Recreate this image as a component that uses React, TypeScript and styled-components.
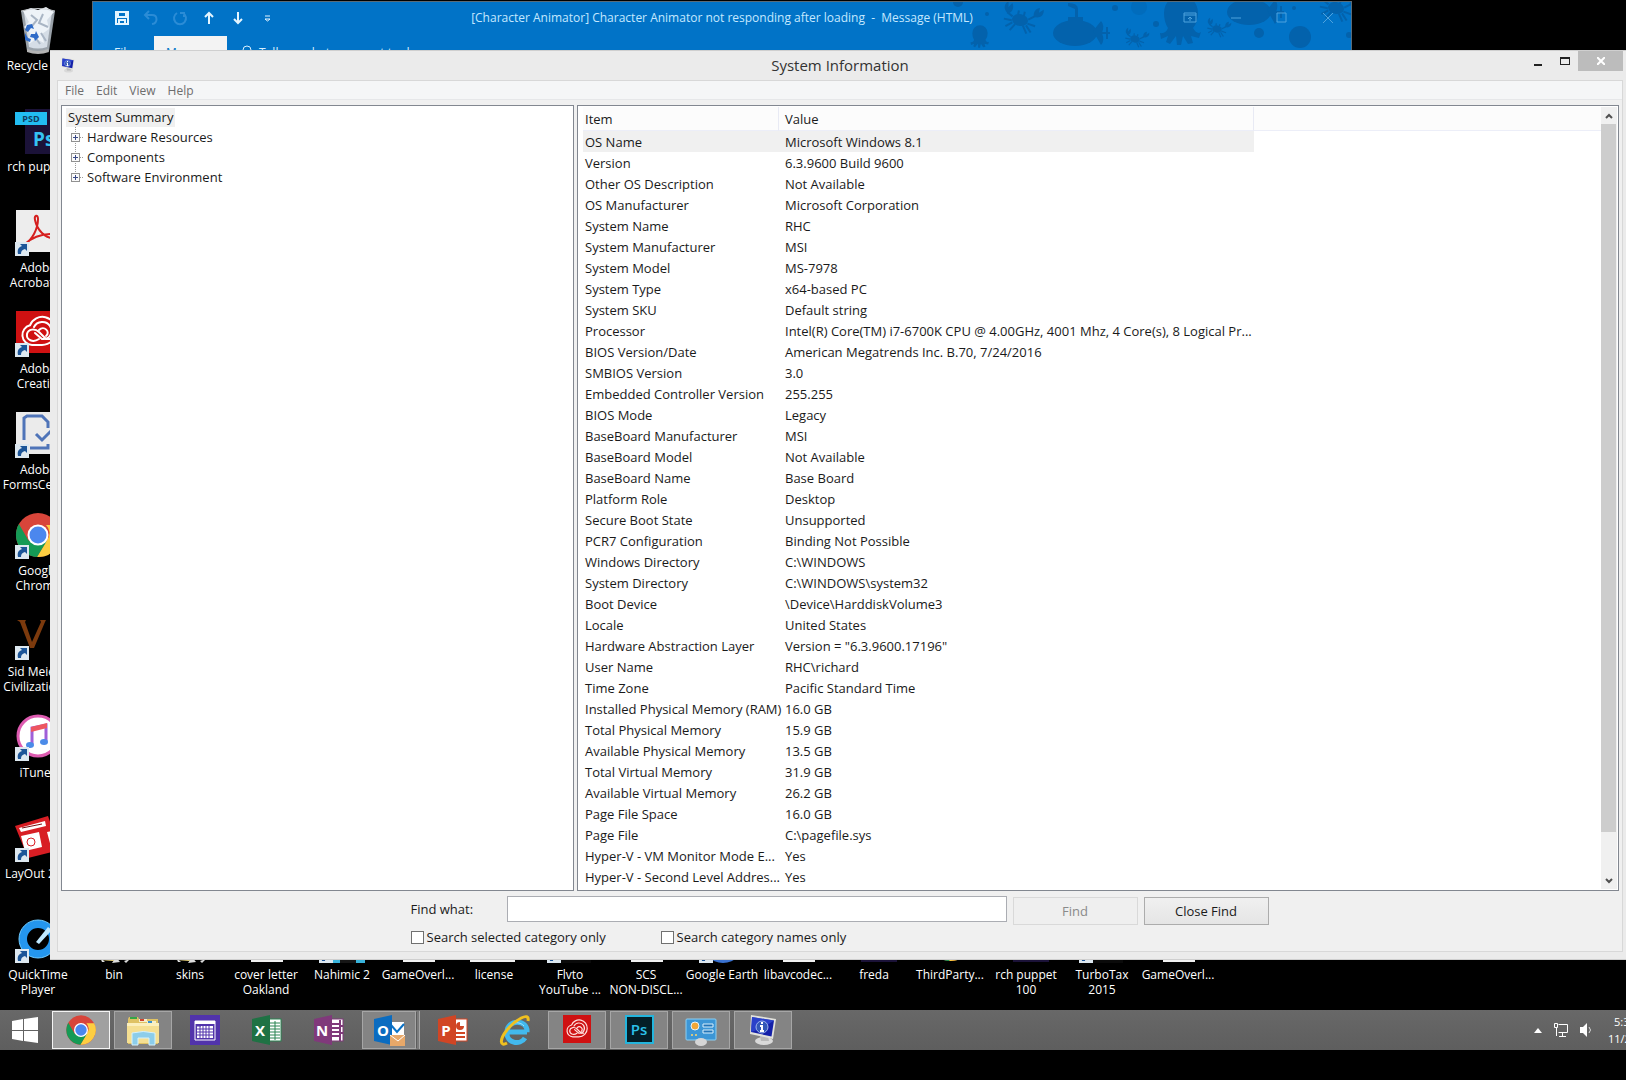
import React from "react";
import styled, { createGlobalStyle } from "styled-components";

const GlobalStyle = createGlobalStyle`
  * { box-sizing: border-box; }
  body { margin: 0; background: #000; }
  body, button, input { font-family: "Open Sans", "Noto Sans", sans-serif; }
  button { padding: 0; border: 0; background: none; color: inherit; }
  svg { display: block; }
`;

/* ---------- Desktop ---------- */

const Desktop = styled.main`
  position: relative;
  display: flex;
  flex-direction: column;
  min-height: 100vh;
  padding-bottom: 30px;
  overflow: hidden;
  background: #000;
  font-size: 12px;
`;

const IconGrid = styled.div`
  flex: 1;
  display: grid;
  grid-template-rows: repeat(9, 101px) 95px;
  grid-auto-columns: 76px;
  padding-top: 6px;
  overflow: hidden;
`;

const Shortcut = styled.button<{ $col: number; $row: number }>`
  grid-column: ${(p) => p.$col};
  grid-row: ${(p) => p.$row};
  display: flex;
  flex-direction: column;
  align-items: center;
  justify-content: flex-start;
  gap: 4px;
  height: 86px;
  color: #fff;
  font-size: 12px;
  line-height: 15px;
  text-align: center;
  white-space: pre;
`;

/* ---------- Mail window ---------- */

const MailWindow = styled.section`
  position: absolute;
  top: 1px;
  left: 92px;
  right: 274px;
  height: 60px;
  border: 1px solid #5a6b78;
  background: #0173c7;
  color: #c4e8ff;
  overflow: hidden;
`;

const MailArt = styled.svg`
  position: absolute;
  top: 0;
  right: 0;
`;

const MailBar = styled.header`
  position: relative;
  display: grid;
  grid-template-columns: 1fr auto 1fr;
  align-items: center;
  height: 32px;
`;

const MailTools = styled.div<{ $end?: boolean }>`
  display: flex;
  justify-content: ${(p) => (p.$end ? "flex-end" : "flex-start")};
  gap: ${(p) => (p.$end ? "30px" : "13px")};
  padding: ${(p) => (p.$end ? "0 15px" : "0 0 0 21px")};
`;

const MailTitle = styled.h2`
  margin: 0;
  font-size: 12px;
  line-height: 16px;
  font-weight: 400;
  white-space: pre;
`;

const MailTabs = styled.nav`
  position: relative;
  display: flex;
  height: 32px;
  margin-top: 2px;
  line-height: 32px;
`;

const MailTab = styled.button<{ $active?: boolean }>`
  width: ${(p) => (p.$active ? "73px" : "61px")};
  font-size: 12px;
  background: ${(p) => (p.$active ? "#f3f3f3" : "transparent")};
  color: ${(p) => (p.$active ? "#0173c7" : "#d8f0ff")};
`;

const TellMe = styled.button`
  display: flex;
  align-items: center;
  gap: 6px;
  padding-left: 14px;
  font-size: 12px;
  color: #d8f0ff;
`;

/* ---------- System Information window ---------- */

const InfoWindow = styled.section`
  position: absolute;
  top: 50px;
  left: 50px;
  right: 0;
  bottom: 120px;
  display: flex;
  flex-direction: column;
  padding: 0 3px 7px 7px;
  border-top: 1px solid #cfcfcf;
  border-bottom: 1px solid #cfcfcf;
  background: #ebebeb;
  color: #1a1a1a;
  font-size: 13px;
`;

const TitleBar = styled.header`
  display: grid;
  grid-template-columns: 1fr auto 1fr;
  flex: 0 0 29px;
`;

const TitleIcon = styled.div`
  padding: 6px 0 0 3px;
`;

const Title = styled.h1`
  margin: 0;
  font-size: 15px;
  line-height: 28px;
  font-weight: 400;
  color: #333;
`;

const Controls = styled.div`
  display: flex;
  justify-content: flex-end;
`;

const ControlButton = styled.button<{ $close?: boolean }>`
  display: flex;
  align-items: center;
  justify-content: center;
  width: ${(p) => (p.$close ? "45px" : "27px")};
  height: 20px;
  background: ${(p) => (p.$close ? "#bcbcbc" : "transparent")};
`;

const Client = styled.div`
  flex: 1;
  min-height: 0;
  display: flex;
  flex-direction: column;
  border: 1px solid #d8d8d8;
  background: #f0f0f0;
`;

const MenuBar = styled.nav`
  display: flex;
  flex: 0 0 19px;
  gap: 12px;
  padding-left: 7px;
  border-bottom: 1px solid #e6e7e9;
  background: #f5f6f7;
`;

const MenuItem = styled.button`
  height: 18px;
  padding-top: 1px;
  font-size: 12px;
  line-height: 17px;
  color: #6d6d6d;
`;

const Panels = styled.div`
  flex: 1;
  min-height: 0;
  display: flex;
  gap: 3px;
  padding: 5px 3px 0;
`;

const TreePanel = styled.div`
  flex: 0 0 513px;
  padding: 2px 4px;
  border: 1px solid #828790;
  background: #fff;
`;

const TreeRoot = styled.button`
  display: block;
  height: 19px;
  padding: 0 2px;
  background: #f0f0f0;
  color: #1a1a1a;
  font-size: 13px;
  line-height: 19px;
`;

const Tree = styled.ul`
  margin: 0;
  padding: 0 0 0 5px;
  list-style: none;
`;

const TreeItem = styled.li`
  display: flex;
  align-items: center;
  gap: 3px;
  height: 20px;
`;

const TreeLabel = styled.button`
  font-size: 13px;
  line-height: 20px;
`;

const ListPanel = styled.div`
  flex: 1;
  min-width: 0;
  display: flex;
  padding: 1px 1px 1px 5px;
  border: 1px solid #828790;
  background: #fff;
`;

const ListBody = styled.div`
  flex: 1;
  min-width: 0;
  overflow: hidden;
`;

const InfoTable = styled.table`
  width: 100%;
  table-layout: fixed;
  border-collapse: separate;
  border-spacing: 0;
  line-height: 20px;
`;

const ItemCol = styled.col`
  width: 196px;
`;

const ValueCol = styled.col`
  width: 475px;
`;

const HeadCell = styled.th`
  height: 24px;
  padding: 0 0 0 6px;
  border-right: 1px solid #e8eaf4;
  border-bottom: 1px solid #eceef8;
  background: #fcfcfc;
  font-weight: 400;
  text-align: left;
  &:first-child { padding-left: 2px; }
  &:last-child { border-right: 0; }
`;

const Row = styled.tr<{ $selected?: boolean }>`
  td:not(:last-child) {
    background: ${(p) => (p.$selected ? "#f0f0f0" : "transparent")};
  }
`;

const Cell = styled.td`
  height: 21px;
  padding: 0 0 0 6px;
  white-space: nowrap;
  &:first-child { padding-left: 2px; }
`;

const ScrollBar = styled.div`
  flex: 0 0 16px;
  display: flex;
  flex-direction: column;
  background: #f0f0f0;
`;

const ScrollButton = styled.button`
  display: flex;
  align-items: center;
  justify-content: center;
  flex: 0 0 17px;
`;

const ScrollTrack = styled.div`
  flex: 1;
  padding-bottom: 40px;
`;

const ScrollThumb = styled.div`
  height: 100%;
  width: 15px;
  background: #cdcdcd;
`;

const FindForm = styled.form`
  flex: 0 0 60px;
  display: flex;
  flex-direction: column;
  align-items: center;
  padding-top: 5px;
`;

const FindRow = styled.div`
  display: grid;
  grid-template-columns: 96px 500px 131px 125px;
  width: 859px;
  height: 30px;
`;

const FindLabel = styled.label`
  line-height: 26px;
`;

const FindInput = styled.input`
  height: 26px;
  border: 1px solid #abadb3;
  background: #fff;
  outline: 0;
`;

const FindButton = styled.button`
  width: 125px;
  height: 28px;
  margin: 1px 0 0 6px;
  border: 1px solid #acacac;
  background: linear-gradient(#f0f0f0, #e5e5e5);
  color: #1a1a1a;
  font-size: 13px;
  &:disabled { border-color: #d9d9d9; background: #efefef; color: #8a8a8a; }
`;

const CheckRow = styled.div`
  display: grid;
  grid-template-columns: 250px 1fr;
  width: 859px;
  height: 22px;
`;

const CheckLabel = styled.label`
  display: flex;
  align-items: center;
  gap: 3px;
`;

const CheckBox = styled.input`
  appearance: none;
  width: 13px;
  height: 13px;
  margin: 0;
  border: 1px solid #707070;
  background: #fff;
`;

/* ---------- Taskbar ---------- */

const Taskbar = styled.footer`
  display: flex;
  flex: 0 0 40px;
  align-items: center;
  background: linear-gradient(#686868, #5e5e5e);
  overflow: hidden;
`;

const StartButton = styled.button`
  display: flex;
  justify-content: center;
  width: 50px;
  margin-right: 2px;
`;

const TaskList = styled.div`
  display: flex;
  flex: 1;
  gap: 4px;
`;

type TaskState = "idle" | "open" | "active" | "stacked";

const TaskButton = styled.button<{ $state: TaskState }>`
  display: flex;
  align-items: center;
  justify-content: center;
  width: ${(p) => (p.$state === "stacked" ? "54px" : "58px")};
  margin-right: ${(p) => (p.$state === "stacked" ? "4px" : "0")};
  height: 38px;
  border: 1px solid
    ${(p) => (p.$state === "idle" ? "transparent" : p.$state === "active" ? "#f4f4f4" : "#a6a6a6")};
  background: ${(p) =>
    p.$state === "idle" ? "transparent" : p.$state === "active" ? "#a0a0a0" : "#848484"};
  box-shadow: ${(p) =>
    p.$state === "stacked" ? "2px 0 0 -1px #5c5c5c, 3px 0 0 0 #7a7a7a, 4px 0 0 0 #a6a6a6" : "none"};
`;

const Tray = styled.div`
  display: flex;
  align-items: center;
  gap: 11px;
  color: #fff;
`;

const Clock = styled.time`
  width: 18px;
  margin-left: 3px;
  font-size: 11px;
  line-height: 17px;
  white-space: nowrap;
`;

const ClockTime = styled.div`
  padding-left: 6px;
`;

/* ---------- Drawings ---------- */

const ArrowBadge = () => (
  <g>
    <rect x="1" y="34" width="14" height="14" fill="#dde8f0" />
    <path d="M4 46c-1-5 1-7 4-8l-2-2h7v7l-2-2c-3 1-4 2-4 5z" fill="#1c5598" />
  </g>
);

const ChromeArt = () => (
  <g>
    <circle cx="24" cy="24" r="22" fill="#d8453a" />
    <path d="M43.7 14A22 22 0 0 1 23 46l10-17A11 11 0 0 0 32 14z" fill="#fdce41" />
    <path d="M4.9 13A22 22 0 0 0 23 46l9.5-15.500l-18-1z" fill="#159a55" />
    <circle cx="24" cy="24" r="10.500" fill="#fff" />
    <circle cx="24" cy="24" r="8.500" fill="#4b87ee" />
  </g>
);

const CloudRings = ({ color = "#fff" }: { color?: string }) => (
  <g fill="none" stroke={color} strokeWidth="2" strokeLinecap="round">
    <path d="M13 33a10 10 0 0 1-2-19.700A13.500 13.500 0 0 1 37 19a14 14 0 0 1-14 14z" />
    <path d="M20 27c-6 4-13 1-12-5 1-5 8-6 12-2l7 7h4" />
    <path d="M15 15c3-6 12-7 16-1 4 7-1 14-8 13l-7-6" />
    <path d="M20 18c5-5 12 2 7 6" />
  </g>
);

const SysInfoArt = () => (
  <g>
    <ellipse cx="17" cy="27" rx="9" ry="4" fill="#d9d9d9" />
    <path d="M13 22h8l1 5h-8z" fill="#b9b9b9" />
    <path d="M4 1l25 4-3 20L3 20z" fill="#e2e2dc" />
    <path d="M5 3l22 3.500-2.500 16L4 18z" fill="#1420a8" />
    <path d="M5 3l22 3.500L16 14 4 18z" fill="#3350d8" opacity=".7" />
    <circle cx="15" cy="13" r="6" fill="#3358b8" stroke="#9fb4ee" />
    <path d="M15 8v2M13 12h2v5M13 17h4" stroke="#fff" strokeWidth="2" fill="none" />
  </g>
);

const desktopArt: Record<string, React.ReactNode> = {
  recycle: (
    <g>
      <path d="M7 5h34l-6 40q-11 4-22 0z" fill="#9aa2aa" />
      <path d="M10 6l28 0-5 35q-9 3-18 0z" fill="#d5dde6" />
      <path d="M9 5l8-3 7 2 8-3 8 5-7 8 2 9-7 5 2 9-8-4-7 5 1-11-6-6 5-5z" fill="#eef3f8" />
      <path d="M17 9l6 5-5 6M29 8l-4 9 9 4M27 27l5 8M21 31l5 7" stroke="#a9b5c4" fill="none" strokeWidth="2" />
      <path d="M13 19l5-1 2 5-3-1-3 4-3-2zM22 25l3 6-4 4-1-3-4-1 1-3h4zM11 27l3 5 3 1-1 3-5-2z" fill="#2f6bc8" />
      <path d="M7 5q17-5 34 0" stroke="#c8ccd0" fill="none" />
      <path d="M13 43q11 4 21 0l1 3q-11 4-22 0z" fill="#b4b4b4" />
    </g>
  ),
  psd: (
    <g>
      <rect x="11" y="2" width="36" height="45" fill="#1b1238" />
      <rect x="1" y="5" width="32" height="13" fill="#22bdf2" />
      <text x="17" y="15" textAnchor="middle" fontSize="9" fontWeight="700" fill="#113c5c">PSD</text>
      <text x="19" y="39" fontSize="19" fontWeight="700" fill="#35c3f3">Ps</text>
    </g>
  ),
  acrobat: (
    <g>
      <rect x="2" y="2" width="44" height="42" fill="#ededed" />
      <path d="M11 36c7-4 13-15 13-25 0-5-4-4-3 1 2 10 10 18 18 18 5 0 3-4-3-4-9 0-19 4-25 10z" fill="none" stroke="#d5201f" strokeWidth="2" />
    </g>
  ),
  cloud: (
    <g>
      <rect x="2" y="2" width="44" height="42" fill="#cf1112" />
      <g transform="translate(5 3)"><CloudRings /></g>
    </g>
  ),
  forms: (
    <g>
      <rect x="2" y="2" width="44" height="42" fill="#ebebeb" />
      <path d="M10 30V8l3-2h15l6 6v6M16 38h18V34M22 24l6 6 12-12" fill="none" stroke="#4f74b8" strokeWidth="3" />
    </g>
  ),
  chrome: <ChromeArt />,
  civ: <path d="M3 8h9l-1 2 7 20 9-20-1-2h6l-1 2-11 26h-4L6 10z" fill="#7c3a0d" />,
  itunes: (
    <g>
      <circle cx="24" cy="23" r="20" fill="#fff" stroke="#dd5bb0" strokeWidth="3" />
      <path d="M18 31V15l14-3v16" stroke="#a05fd8" strokeWidth="3" fill="none" />
      <path d="M17 14l16-4v5l-16 4z" fill="#ee5560" />
      <ellipse cx="16" cy="32" rx="4" ry="3" fill="#4b8be8" />
      <ellipse cx="30" cy="29" rx="4" ry="3" fill="#4b8be8" />
    </g>
  ),
  layout: (
    <g>
      <path d="M1 12L34 2l12 34-32 8z" fill="#d81e24" />
      <path d="M5 14l26-7 1 5-25 6zM7 22l18-4 3 15-17 4zM33 18l5-1 4 15-5 1zM34 7l4 7" fill="#fff" />
      <circle cx="17" cy="28" r="4" fill="none" stroke="#d81e24" />
      <path d="M8 14l20-4" stroke="#7c1114" />
    </g>
  ),
  quicktime: (
    <g>
      <circle cx="24" cy="24" r="15" fill="none" stroke="#2496ee" strokeWidth="8" />
      <circle cx="24" cy="24" r="19" fill="none" stroke="#6fcaff" />
      <path d="M22 27L34 12l4 3-13 14z" fill="#bfe8ff" />
    </g>
  ),
  folder: (
    <g>
      <path d="M8 10h14l3 4h15v28l-17 4-13-1z" fill="#e8d27c" />
      <path d="M10 42l5 5h-3zM22 48l4-6 4 5zM34 46l6-2-4 4z" fill="#ddd" />
    </g>
  ),
  page: <rect x="9" y="4" width="32" height="43" fill="#f1f1f1" />,
  wide: <rect x="0" y="14" width="45" height="33" fill="#f1f1f1" />,
  nahimic: (
    <g>
      <rect x="2" y="2" width="45" height="46" fill="#39b4dc" />
      <rect x="22" y="2" width="16" height="46" fill="#161616" />
    </g>
  ),
  earth: <circle cx="25" cy="26" r="22" fill="#3a72d0" />,
  dark: <rect x="5" y="4" width="40" height="44" fill="#0a0a0a" />,
};

type DesktopIcon = { label: string; art: string; link?: boolean };

const leftIcons: DesktopIcon[] = [
  { label: "Recycle Bin", art: "recycle" },
  { label: "rch puppet", art: "psd" },
  { label: "Adobe\nAcrobat ...", art: "acrobat", link: true },
  { label: "Adobe\nCreati...", art: "cloud", link: true },
  { label: "Adobe\nFormsCent...", art: "forms", link: true },
  { label: "Google\nChrome", art: "chrome", link: true },
  { label: "Sid Meier's\nCivilization...", art: "civ", link: true },
  { label: "iTunes", art: "itunes", link: true },
  { label: "LayOut 20...", art: "layout", link: true },
  { label: "QuickTime\nPlayer", art: "quicktime", link: true },
];

const bottomIcons: DesktopIcon[] = [
  { label: "bin", art: "folder" },
  { label: "skins", art: "folder" },
  { label: "cover letter\nOakland", art: "page" },
  { label: "Nahimic 2", art: "nahimic", link: true },
  { label: "GameOverl...", art: "page" },
  { label: "license", art: "wide" },
  { label: "Flvto\nYouTube ...", art: "dark", link: true },
  { label: "SCS\nNON-DISCL...", art: "page" },
  { label: "Google Earth", art: "earth", link: true },
  { label: "libavcodec...", art: "page" },
  { label: "freda", art: "psd" },
  { label: "ThirdParty...", art: "chrome" },
  { label: "rch puppet\n100", art: "psd" },
  { label: "TurboTax\n2015", art: "dark", link: true },
  { label: "GameOverl...", art: "page" },
];

const DesktopShortcut = ({ icon, col, row }: { icon: DesktopIcon; col: number; row: number }) => (
  <Shortcut $col={col} $row={row}>
    <svg width="48" height="48" viewBox="0 0 48 48" aria-hidden="true">
      {desktopArt[icon.art]}
      {icon.link && <ArrowBadge />}
    </svg>
    {icon.label}
  </Shortcut>
);

const Crab = ({ x, y, s }: { x: number; y: number; s: number }) => (
  <g transform={`translate(${x} ${y}) rotate(12) scale(${s})`}>
    <ellipse cx="0" cy="0" rx="8" ry="6" />
    <path d="M-8-2l-6-3M8-2l6-5M-8 2l-8 0M-7 4l-6 5M8 2l8 1M7 4l6 6M-4 5l-4 7M4 5l5 7M-3-5v-4M3-5v-4" stroke="#0362ac" strokeWidth="2" />
    <path d="M-13-4c-6-3-6-9-2-12l1 6 3-5c3 4 2 9-2 11zM13-6c-2-4 0-9 4-10l0 5 4-4c2 5-2 10-8 9z" />
  </g>
);

const Submarine = ({ x, y }: { x: number; y: number }) => (
  <g transform={`translate(${x} ${y})`}>
    <ellipse cx="0" cy="0" rx="22" ry="13" />
    <path d="M-7-16h15v8H-7zM0-16v-8l-7-3v-3q10 0 10 6v8zM18-2l8-10q4 4 1 12 3 8-1 12zM27-1h8v2h-8zM31-6h2v12h-2z" />
  </g>
);

const Octopus = ({ x, y, s }: { x: number; y: number; s: number }) => (
  <g transform={`translate(${x} ${y}) scale(${s})`}>
    <path d="M-17-6a17 18 0 0 1 34 0q0 9-5 15 4 7 8 4l-2 6-8-2 2 7-5 1-5-8-2 9h-4l-1-9-6 8-4-2 2-6-7 3-1-6q6 1 8-5-4-6-4-15z" />
  </g>
);

const Sea = () => (
  <MailArt width="440" height="58" viewBox="0 0 440 58" aria-hidden="true">
    <g fill="#0362ac">
      <circle cx="47" cy="0" r="5" /><circle cx="76" cy="12" r="2" />
      <Octopus x={69} y={34} s={0.45} />
      <Crab x={109} y={18} s={1} />
      <Submarine x={164} y={31} />
      <circle cx="204" cy="6" r="3" /><circle cx="228" cy="5" r="8" opacity=".4" />
      <Crab x={224} y={37} s={0.6} /><circle cx="245" cy="22" r="3" />
      <Octopus x={270} y={17} s={1} />
      <Crab x={306} y={27} s={0.6} />
      <Submarine x={338} y={10} />
      <circle cx="348" cy="31" r="5" /><circle cx="383" cy="6" r="2" /><circle cx="389" cy="35" r="11" />
      <Crab x={425} y={6} s={1} /><circle cx="438" cy="33" r="3" />
    </g>
  </MailArt>
);

const toolArt: { name: string; dim?: boolean; d: string }[] = [
  { name: "Save", d: "M2 2h12v12H2zM4 2v5h8V2M5 14v-4h6v4" },
  { name: "Undo", dim: true, d: "M6 1L2 5l4 4M2 5h7c6 0 6 8 0 9" },
  { name: "Redo", dim: true, d: "M5 3a6 6 0 1 0 6 0M8 3h4v4" },
  { name: "Previous item", d: "M8 14V3M4 7l4-4 4 4" },
  { name: "Next item", d: "M8 2v11M4 9l4 4 4-4" },
  { name: "Customize toolbar", d: "M6 6h5M6 9h5l-2.500 2z" },
];

/* ---------- Taskbar drawings (32 x 32) ---------- */

const OfficeTile = ({ letter, dark, light }: { letter: string; dark: string; light: string }) => (
  <g>
    <rect x="16" y="5" width="14" height="22" fill="#fff" stroke={light} />
    {letter === "X" && <path d="M18 9h11M18 12h11M18 15h11M18 18h11M18 21h11M18 24h11M24 7v19" stroke={light} />}
    {letter === "N" && <path d="M19 10h7M19 14h7M19 18h7M19 22h7M27 6v21M27 12h3M27 19h3" stroke={light} strokeWidth="2" />}
    {letter === "P" && (
      <g>
        <circle cx="23" cy="12" r="4" fill={light} />
        <path d="M23 12V8h4v4z" fill="#fff" />
        <path d="M19 19h9M19 23h9" stroke={light} strokeWidth="2" />
      </g>
    )}
    <path d="M1 5l18-4v30L1 27z" fill={dark} />
    <text x="9" y="22" textAnchor="middle" fontSize="15" fontWeight="700" fill="#fff">{letter}</text>
  </g>
);

const tasks: { name: string; state: TaskState; art: React.ReactNode }[] = [
  { name: "Google Chrome", state: "active", art: <g transform="scale(.667)"><ChromeArt /></g> },
  {
    name: "File Explorer",
    state: "open",
    art: (
      <g>
        <path d="M1 5l1-2h9l1 2h19v25H1z" fill="#dfc264" />
        <path d="M3 3h7v2H3z" fill="#35a546" />
        <path d="M12 5h8v3h-8z" fill="#f4eecf" /><path d="M13 5h4v2h-4z" fill="#d2452d" />
        <path d="M20 7h9v3h-9z" fill="#f4eecf" /><path d="M21 7h4v2h-4z" fill="#3a92cc" />
        <path d="M0 9h32v20H0z" fill="#f5df92" />
        <path d="M0 9h32v3H0z" fill="#fbefbd" />
        <path d="M5 19q11-3 23 0v12h-6v-7H11v7H5z" fill="#8ccdea" stroke="#d4f1fc" />
      </g>
    ),
  },
  {
    name: "Calendar",
    state: "idle",
    art: (
      <g>
        <rect x="1" y="1" width="30" height="30" fill="#5133ab" />
        <path d="M6 7h20v19H6z" fill="none" stroke="#fff" strokeWidth="1" />
        <path d="M6 7h20v3H6zM8 12h16v12H8z" fill="#fff" />
        <path d="M8 12h4M8 15h16M8 18h16M8 21h16M11 12v12M14 12v12M17 12v12M20 12v12" stroke="#5133ab" />
      </g>
    ),
  },
  { name: "Excel", state: "idle", art: <OfficeTile letter="X" dark="#1f7244" light="#2a8452" /> },
  { name: "OneNote", state: "idle", art: <OfficeTile letter="N" dark="#80397b" light="#80397b" /> },
  {
    name: "Outlook",
    state: "stacked",
    art: (
      <g>
        <path d="M17 8h14v14H17z" fill="#fff" />
        <path d="M18 11l6 7 7-8" stroke="#0b72c6" fill="none" strokeWidth="2" />
        <path d="M1 5l18-4v30L1 27z" fill="#0b6cc0" />
        <text x="10" y="22" textAnchor="middle" fontSize="15" fontWeight="700" fill="#fff">O</text>
        <path d="M17 21h15v11H17z" fill="#e8a869" />
        <path d="M17 21l8 6 7-6" stroke="#fff" fill="none" />
      </g>
    ),
  },
  { name: "PowerPoint", state: "idle", art: <OfficeTile letter="P" dark="#d14524" light="#d14524" /> },
  {
    name: "Internet Explorer",
    state: "idle",
    art: (
      <g fill="none">
        <path d="M8 18h20M26 24c-5 8-19 5-18-6C8 5 29 5 28 18" stroke="#42b9ee" strokeWidth="5" />
        <path d="M10 13c4-6 12-5 15-1" stroke="#9ce2fb" strokeWidth="1" />
        <path d="M8 29c-7 4-8-3 0-13S31-3 29 7" stroke="#f0c01f" strokeWidth="3" />
      </g>
    ),
  },
  {
    name: "Creative Cloud",
    state: "open",
    art: (
      <g>
        <rect x="2" y="1" width="28" height="28" fill="#cf1112" />
        <g transform="translate(4 3) scale(.6)"><CloudRings color="#ffe1df" /></g>
      </g>
    ),
  },
  {
    name: "Photoshop",
    state: "open",
    art: (
      <g>
        <rect x="3" y="2" width="27" height="27" fill="#041e27" stroke="#24b5dd" strokeWidth="2" />
        <text x="16" y="21" textAnchor="middle" fontSize="15" fontWeight="600" fill="#2cc1ea">Ps</text>
      </g>
    ),
  },
  {
    name: "Control Panel",
    state: "open",
    art: (
      <g>
        <rect x="1" y="5" width="30" height="21" rx="1" fill="#3c96d6" stroke="#8bd0f4" />
        <circle cx="10" cy="12" r="4" fill="#f3a738" stroke="#e7f5fd" />
        <path d="M18 10h10v3H18zM18 16h10v3H18z" fill="#2275b8" stroke="#d8f0fd" />
        <circle cx="7" cy="21" r="1" fill="#ffd76a" /><circle cx="11" cy="21" r="1" fill="#ffd76a" />
        <ellipse cx="16" cy="28" rx="6" ry="4" fill="#d6d6d6" />
      </g>
    ),
  },
  { name: "System Information", state: "open", art: <SysInfoArt /> },
];

const rows: [string, string][] = [
  ["OS Name", "Microsoft Windows 8.1"],
  ["Version", "6.3.9600 Build 9600"],
  ["Other OS Description", "Not Available"],
  ["OS Manufacturer", "Microsoft Corporation"],
  ["System Name", "RHC"],
  ["System Manufacturer", "MSI"],
  ["System Model", "MS-7978"],
  ["System Type", "x64-based PC"],
  ["System SKU", "Default string"],
  ["Processor", "Intel(R) Core(TM) i7-6700K CPU @ 4.00GHz, 4001 Mhz, 4 Core(s), 8 Logical Pr..."],
  ["BIOS Version/Date", "American Megatrends Inc. B.70, 7/24/2016"],
  ["SMBIOS Version", "3.0"],
  ["Embedded Controller Version", "255.255"],
  ["BIOS Mode", "Legacy"],
  ["BaseBoard Manufacturer", "MSI"],
  ["BaseBoard Model", "Not Available"],
  ["BaseBoard Name", "Base Board"],
  ["Platform Role", "Desktop"],
  ["Secure Boot State", "Unsupported"],
  ["PCR7 Configuration", "Binding Not Possible"],
  ["Windows Directory", "C:\\WINDOWS"],
  ["System Directory", "C:\\WINDOWS\\system32"],
  ["Boot Device", "\\Device\\HarddiskVolume3"],
  ["Locale", "United States"],
  ["Hardware Abstraction Layer", 'Version = "6.3.9600.17196"'],
  ["User Name", "RHC\\richard"],
  ["Time Zone", "Pacific Standard Time"],
  ["Installed Physical Memory (RAM)", "16.0 GB"],
  ["Total Physical Memory", "15.9 GB"],
  ["Available Physical Memory", "13.5 GB"],
  ["Total Virtual Memory", "31.9 GB"],
  ["Available Virtual Memory", "26.2 GB"],
  ["Page File Space", "16.0 GB"],
  ["Page File", "C:\\pagefile.sys"],
  ["Hyper-V - VM Monitor Mode E...", "Yes"],
  ["Hyper-V - Second Level Addres...", "Yes"],
];

const treeItems = ["Hardware Resources", "Components", "Software Environment"];

const Mail = () => (
  <MailWindow>
    <Sea />
    <MailBar>
      <MailTools>
        {toolArt.map((t) => (
          <button key={t.name} aria-label={t.name}>
            <svg width="16" height="16" viewBox="0 0 16 16" fill="none" stroke={t.dim ? "#2b8cd6" : "#e4f5ff"} strokeWidth={t.name.startsWith("Custom") ? 1 : 2}>
              <path d={t.d} />
            </svg>
          </button>
        ))}
      </MailTools>
      <MailTitle>{"[Character Animator] Character Animator not responding after loading  -  Message (HTML)"}</MailTitle>
      <MailTools $end>
        {[
          ["Ribbon options", "M2 3h12v9H2zM2 5h12M8 11V7M6 9l2-2 2 2"],
          ["Minimize mail", "M3 8h10"],
          ["Maximize mail", "M3 3h9v9H3z"],
          ["Close mail", "M3 3l10 10M13 3L3 13"],
        ].map(([name, d]) => (
          <button key={name} aria-label={name}>
            <svg width="16" height="16" viewBox="0 0 16 16" fill="none" stroke="#4fa3de"><path d={d} /></svg>
          </button>
        ))}
      </MailTools>
    </MailBar>
    <MailTabs>
      <MailTab>File</MailTab>
      <MailTab $active>Message</MailTab>
      <TellMe>
        <svg width="12" height="14" viewBox="0 0 12 14" fill="none" stroke="#d8f0ff"><circle cx="6" cy="5" r="4" /><path d="M4 9v4h4V9" /></svg>
        Tell me what you want to do
      </TellMe>
    </MailTabs>
  </MailWindow>
);

const SystemInformation = () => (
  <InfoWindow>
    <TitleBar>
      <TitleIcon>
        <svg width="16" height="16" viewBox="0 0 32 32" aria-hidden="true"><SysInfoArt /></svg>
      </TitleIcon>
      <Title>System Information</Title>
      <Controls>
        <ControlButton aria-label="Minimize">
          <svg width="10" height="12"><path d="M1 9h8v2H1z" fill="#222" /></svg>
        </ControlButton>
        <ControlButton aria-label="Maximize">
          <svg width="10" height="8"><path d="M0 0h10v8H0zM1 2v5h8V2z" fillRule="evenodd" fill="#222" /></svg>
        </ControlButton>
        <ControlButton $close aria-label="Close">
          <svg width="8" height="8"><path d="M0 0l8 8M8 0L0 8" stroke="#fff" strokeWidth="2" /></svg>
        </ControlButton>
      </Controls>
    </TitleBar>
    <Client>
      <MenuBar>
        {["File", "Edit", "View", "Help"].map((m) => <MenuItem key={m}>{m}</MenuItem>)}
      </MenuBar>
      <Panels>
        <TreePanel>
          <TreeRoot>System Summary</TreeRoot>
          <Tree>
            {treeItems.map((t, i) => (
              <TreeItem key={t}>
                <svg width="13" height="20" aria-hidden="true">
                  <path d={i === 2 ? "M4.500 0v10" : "M4.500 0v20"} stroke="#999" strokeDasharray="1 1" />
                  <path d="M9 10.500h4" stroke="#999" strokeDasharray="1 1" />
                  <rect x=".5" y="6.500" width="8" height="8" fill="#fafafa" stroke="#919191" />
                  <path d="M2 10.500h5M4.500 8v5" stroke="#3b4a86" />
                </svg>
                <TreeLabel>{t}</TreeLabel>
              </TreeItem>
            ))}
          </Tree>
        </TreePanel>
        <ListPanel>
          <ListBody>
            <InfoTable>
              <colgroup><ItemCol /><ValueCol /><col /></colgroup>
              <thead>
                <tr><HeadCell scope="col">Item</HeadCell><HeadCell scope="col">Value</HeadCell><HeadCell as="td" /></tr>
              </thead>
              <tbody>
                {rows.map(([item, value], i) => (
                  <Row key={item} $selected={i === 0}><Cell>{item}</Cell><Cell>{value}</Cell><Cell /></Row>
                ))}
              </tbody>
            </InfoTable>
          </ListBody>
          <ScrollBar>
            <ScrollButton aria-label="Scroll up">
              <svg width="8" height="6"><path d="M1 5l3-3 3 3" stroke="#505050" strokeWidth="2" fill="none" /></svg>
            </ScrollButton>
            <ScrollTrack><ScrollThumb /></ScrollTrack>
            <ScrollButton aria-label="Scroll down">
              <svg width="8" height="6"><path d="M1 1l3 3 3-3" stroke="#505050" strokeWidth="2" fill="none" /></svg>
            </ScrollButton>
          </ScrollBar>
        </ListPanel>
      </Panels>
      <FindForm onSubmit={(e) => e.preventDefault()}>
        <FindRow>
          <FindLabel htmlFor="find">Find what:</FindLabel>
          <FindInput id="find" type="text" />
          <FindButton type="submit" disabled>Find</FindButton>
          <FindButton type="button">Close Find</FindButton>
        </FindRow>
        <CheckRow>
          <CheckLabel><CheckBox type="checkbox" />Search selected category only</CheckLabel>
          <CheckLabel><CheckBox type="checkbox" />Search category names only</CheckLabel>
        </CheckRow>
      </FindForm>
    </Client>
  </InfoWindow>
);

export default function App() {
  return (
    <Desktop>
      <GlobalStyle />
      <IconGrid>
        {leftIcons.map((icon, i) => <DesktopShortcut key={i} icon={icon} col={1} row={i + 1} />)}
        {bottomIcons.map((icon, i) => <DesktopShortcut key={i} icon={icon} col={i + 2} row={10} />)}
      </IconGrid>
      <Mail />
      <SystemInformation />
      <Taskbar>
        <StartButton aria-label="Start">
          <svg width="26" height="26" viewBox="0 0 26 26" fill="#fff">
            <path d="M0 4l11-2v11H0zM12 2l14-2v13H12zM0 14h11v10L0 22zM12 14h14v12l-14-2z" />
          </svg>
        </StartButton>
        <TaskList>
          {tasks.map((t) => (
            <TaskButton key={t.name} $state={t.state} aria-label={t.name}>
              <svg width="32" height="32" viewBox="0 0 32 32">{t.art}</svg>
            </TaskButton>
          ))}
        </TaskList>
        <Tray>
          <svg width="8" height="5"><path d="M0 5l4-5 4 5z" fill="#fff" /></svg>
          <svg width="16" height="16" fill="none" stroke="#fff" strokeWidth="1"><path d="M5.500 2.500h9v8h-9M1.500 1.500h3v4h-3zM3.500 6v8M9.500 11v3M6 14.500h7" /></svg>
          <svg width="14" height="14"><path d="M0 4h3l4-4v14l-4-4H0z" fill="#fff" /><path d="M9 4q3 3 0 6" stroke="#ddd" fill="none" /></svg>
          <Clock><ClockTime>5:3</ClockTime>11/2</Clock>
        </Tray>
      </Taskbar>
    </Desktop>
  );
}
